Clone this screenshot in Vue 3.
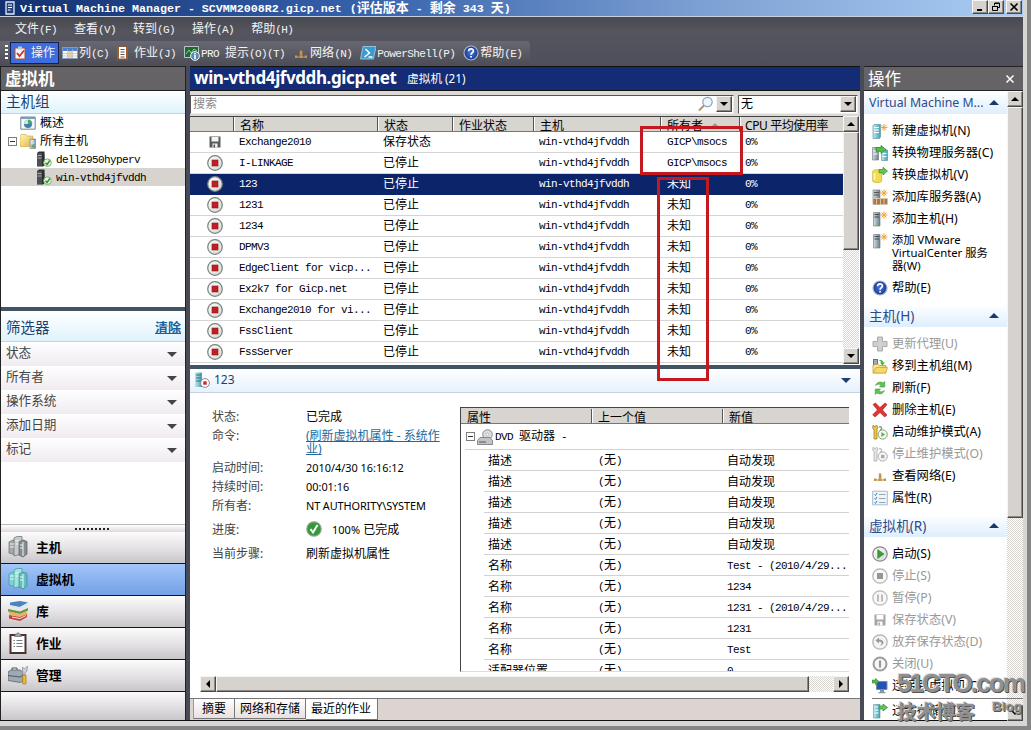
<template>
  <div class="window">
    <svg class="symbols" aria-hidden="true">
      <defs>
        <linearGradient id="gServer" x1="0" x2="1"><stop offset="0" stop-color="#d5dde0" /><stop offset="1" stop-color="#6d7f88" /></linearGradient>
        <linearGradient id="gVm" x1="0" x2="1"><stop offset="0" stop-color="#bdeaf2" /><stop offset="1" stop-color="#3f9fb4" /></linearGradient>
        <linearGradient id="gRing" x1="0" x2="1" y2="1"><stop offset="0" stop-color="#fff" /><stop offset="1" stop-color="#d3d5d3" /></linearGradient>
        <radialGradient id="gBlue"><stop offset="0" stop-color="#4c7ae0" /><stop offset="1" stop-color="#16388f" /></radialGradient>
        <linearGradient id="gFolder" x1="0" x2="1" y2="1"><stop offset="0" stop-color="#fff6b8" /><stop offset="1" stop-color="#e3b53c" /></linearGradient>
      </defs>
      <symbol id="stop" viewBox="0 0 16 16">
        <circle cx="8" cy="8" r="7.3" fill="url(#gRing)" stroke="#77827b" stroke-width="1.2" />
        <rect x="5" y="5" width="6" height="6" fill="#c01f24" stroke="#8f1a1c" stroke-width=".6" />
      </symbol>
      <symbol id="floppy" viewBox="0 0 16 16">
        <path d="M2.500 2.500h11v11h-11z" fill="#5a5a5a" /><path d="M4.500 3h7v4.500h-7zM5.500 9.500h5v4h-5z" fill="#f4f4f4" /><path d="M6.500 10.500h1.600v3H6.500z" fill="#555" />
      </symbol>
      <symbol id="overview" viewBox="0 0 16 16">
        <path d="M.8 2h14.4v12.2H.8z" fill="#f4f8fa" stroke="#72858f" /><path d="M1 2h14v2H1z" fill="#7ba1b8" />
        <circle cx="8" cy="9" r="4" fill="#3f7fa8" /><path d="M8 9V4.6A4.4 4.4 0 0 1 12.4 9z" fill="#4aa860" /><path d="M8 9H4a4 4 0 0 1 4-4z" fill="#cfe3ee" />
      </symbol>
      <symbol id="folder" viewBox="0 0 16 16">
        <path d="M0 3l1-1.500h5L7.200 3H13v10.500H0z" fill="url(#gFolder)" stroke="#cda93b" stroke-width=".6" />
        <path d="M10 6h5.500v9.500H10z" fill="url(#gServer)" stroke="#66767c" stroke-width=".5" /><path d="M11 8h3.500M11 10h3.500" stroke="#fff" /><path d="M11.500 12.500h2v1.500h-2z" fill="#48a344" />
      </symbol>
      <symbol id="host" viewBox="0 0 16 16">
        <path d="M1 2l2-1.500h5.500L9 14l-2 1.500H1z" fill="#2c3033" /><path d="M1 2h5v13H1z" fill="#4a5054" /><path d="M1.500 4.500h4M1.500 7h4" stroke="#a5adb1" />
        <circle cx="11.500" cy="11.700" r="3.800" fill="#e9f5e5" stroke="#7eb371" /><path d="M9.500 11.700l1.600 1.800 2.700-4" fill="none" stroke="#2d9130" stroke-width="1.400" />
      </symbol>
      <symbol id="vmNew" viewBox="0 0 16 16">
        <path d="M1 2.500L2 1.500h6.500V14l-1 1.500H1z" fill="url(#gVm)" stroke="#5d8d99" stroke-width=".6" /><path d="M2 4.500h5M2 7h5M2 9.500h5" stroke="#fff" /><path d="M12 1v7M8.500 4.500h7M9.600 2.100l4.800 4.800M14.400 2.100L9.600 6.900" stroke="#f0a33b" />
      </symbol>
      <symbol id="p2v" viewBox="0 0 16 16">
        <path d="M.5 2.500h6V15h-6z" fill="url(#gServer)" stroke="#66757b" stroke-width=".6" /><path d="M9.500 5h6v10.500h-6z" fill="url(#gVm)" stroke="#47909e" stroke-width=".6" /><path d="M1.500 6h4M1.500 9h4M10.500 8.500h4M10.500 11.500h4" stroke="#fff" />
        <path d="M4 2.500h5V.500l5 4-5 4v-2.200H4z" fill="#55bd49" stroke="#25812a" stroke-width=".7" />
      </symbol>
      <symbol id="v2v" viewBox="0 0 16 16">
        <path d="M.7 4.500c0-2.500 9-2.500 9 0v9.500c0 2-9 2-9 0z" fill="#f3db52" stroke="#d3ac21" stroke-width=".7" /><path d="M2.500 6v7" stroke="#fff8b8" stroke-width="1.500" />
        <path d="M7 2.500h4V.300l4.500 3.800L11 8V5.800H7z" fill="#66c653" stroke="#2c8a2e" stroke-width=".7" />
      </symbol>
      <symbol id="library" viewBox="0 0 16 16">
        <path d="M1 1h7v14H1z" fill="url(#gServer)" stroke="#6b767b" stroke-width=".6" /><path d="M2 3.500h5M2 6h5" stroke="#555" />
        <path d="M1.500 9.500h14v6h-14z" fill="#a17b54" /><path d="M1.500 9.500h14M4.500 10v5.500M8.500 10v5.500M12 10v5.500" stroke="#dfc298" /><path d="M12 .500v7M8.500 4h7M9.600 1.600l4.800 4.800M14.400 1.600L9.600 6.400" stroke="#f0a33b" />
      </symbol>
      <symbol id="hostNew" viewBox="0 0 16 16">
        <path d="M1.500 1.500h6.500V15H1.500z" fill="url(#gServer)" stroke="#66757b" stroke-width=".6" /><path d="M2.500 3.500h4.500M2.500 6h4.500" stroke="#3e4a50" /><path d="M5.500 12h1.500v1.500H5.500z" fill="#51b846" /><path d="M12 .500v7M8.500 4h7M9.600 1.600l4.800 4.800M14.400 1.600L9.600 6.400" stroke="#f0a33b" />
      </symbol>
      <symbol id="help" viewBox="0 0 16 16">
        <circle cx="8" cy="8" r="7" fill="url(#gBlue)" stroke="#a9b3cb" stroke-width="1.200" /><path d="M5.600 6.300C5.600 3 10.500 3.100 10.400 6c0 1.700-2.300 1.700-2.300 3.700" fill="none" stroke="#fff" stroke-width="1.700" /><path d="M7.200 10.900h1.800v1.700H7.200z" fill="#fff" />
      </symbol>
      <symbol id="plus" viewBox="0 0 16 16"><path d="M5.500 1h5v4.500H15v5h-4.500V15h-5v-4.500H1v-5h4.500z" fill="#cfcfcf" stroke="#aaa" /></symbol>
      <symbol id="move" viewBox="0 0 16 16">
        <path d="M1 1h5v9H1z" fill="#567482" /><path d="M2 3h3M2 5h3" stroke="#dce9ef" /><path d="M1 7l5-1 1.500 1.500H14v7.500H1z" fill="url(#gFolder)" stroke="#bf9428" stroke-width=".7" /><path d="M1.500 15L4 9.500h11.700L13.500 15z" fill="#f7d868" stroke="#c59a2b" stroke-width=".6" /><path d="M6.500 2.500c3-1.500 4.500 0 4.800 2h1.700L10.500 7.600 8 4.500h1.500C9.200 3.300 8 3 6.500 2.500z" fill="#4aae46" />
      </symbol>
      <symbol id="refresh" viewBox="0 0 16 16">
        <path d="M3.500 5.500C5 1.500 9.500 1.500 11 3l1.800-1.500V7H7.500l1.700-2C7.500 3.800 5.500 4 3.500 5.500z" fill="#5fc257" stroke="#348f38" stroke-width=".5" /><path d="M12.500 10.500C11 14.500 6.500 14.500 5 13l-1.800 1.500V9h5.300l-1.700 2c1.700 1.200 3.700 1 5.700-.5z" fill="#5fc257" stroke="#348f38" stroke-width=".5" />
      </symbol>
      <symbol id="delete" viewBox="0 0 16 16"><path d="M1 2.500L3.500 1 8 5.500 13 1l2 1.500L10.500 8l4.500 5-2.300 2L8 10.500 3 15 .7 12.700 5.500 8z" fill="#df3431" stroke="#a91c1f" stroke-width=".6" /></symbol>
      <symbol id="maint" viewBox="0 0 16 16">
        <path d="M1 1.200l2 1.800 1.500-2 1.500 2-1 2.500V15H2V6L.700 4z" fill="#edc548" stroke="#92732a" stroke-width=".7" /><path d="M7 3c2-1 3.500 1 2 2.500L7.500 8" fill="none" stroke="#7d8d91" stroke-width="1.300" /><circle cx="10.700" cy="10.500" r="4.600" fill="#f5f9f1" stroke="#84a275" /><path d="M9.300 8v5l4-2.500z" fill="#73ad55" />
      </symbol>
      <symbol id="maintOff" viewBox="0 0 16 16">
        <path d="M1 1.200l2 1.800 1.500-2 1.500 2-1 2.500V15H2V6L.700 4z" fill="#e3e3e3" stroke="#aaa" stroke-width=".7" /><path d="M7 3c2-1 3.500 1 2 2.500L7.500 8" fill="none" stroke="#bbb" stroke-width="1.300" /><circle cx="10.700" cy="10.500" r="4.600" fill="#f7f7f7" stroke="#aaa" /><path d="M9 8.800h3.500v3.500H9z" fill="#aaa" />
      </symbol>
      <symbol id="network" viewBox="0 0 16 16"><path d="M8 5v6M2 12h12" stroke="#b58b4e" stroke-width="1.200" /><path d="M6.800 6h2.600v4H6.800zM2 10.500h2.500v2.500H2zM11.500 10.500H14v2.500h-2.500zM6.300 10.500h3.500v2.500H6.300z" fill="#c5934a" /></symbol>
      <symbol id="props" viewBox="0 0 16 16"><path d="M.7 1.200h14.600v13.600H.7z" fill="#edf4fa" stroke="#a7bccb" /><path d="M2.500 4.500l1 1L5 3M2.500 8.500l1 1L5 7M2.500 12.500l1 1L5 11" fill="none" stroke="#447bb4" /><path d="M7 4.500h6.500M7 8.500h6.500M7 12.500h6.500" stroke="#9ba6ae" /></symbol>
      <symbol id="play" viewBox="0 0 16 16"><circle cx="8" cy="8" r="7.200" fill="url(#gRing)" stroke="#8b8391" stroke-width="1.200" /><path d="M5.700 3.500v9L12 8z" fill="#35a12e" stroke="#1d7a1f" stroke-width=".5" /></symbol>
      <symbol id="stopOff" viewBox="0 0 16 16"><circle cx="8" cy="8" r="7.200" fill="#f7f7f7" stroke="#b0b0b0" stroke-width="1.200" /><path d="M5 5h6v6H5z" fill="#969696" /></symbol>
      <symbol id="pause" viewBox="0 0 16 16"><circle cx="8" cy="8" r="7.200" fill="#f7f7f7" stroke="#b8b8b8" stroke-width="1.200" /><path d="M5 4.500h2v7H5zM9 4.500h2v7H9z" fill="#bbb" /></symbol>
      <symbol id="save" viewBox="0 0 16 16"><path d="M2.500 2.500h11v11h-11z" fill="#a5a5a5" /><path d="M4.500 3h7v4.500h-7zM5.500 9.500h5v4h-5z" fill="#fff" /><path d="M6.500 10.500h1.600v3H6.500z" fill="#aaa" /></symbol>
      <symbol id="undo" viewBox="0 0 16 16"><circle cx="8" cy="8" r="7.200" fill="#f4f4f4" stroke="#b0b0b0" stroke-width="1.200" /><path d="M7 3.500L3.500 6.500 7 9.500V7.500c3.500 0 3.500 3 .5 4 5.500-.3 5.300-6-.5-6z" fill="#999" /></symbol>
      <symbol id="power" viewBox="0 0 16 16"><circle cx="8" cy="8" r="6.500" fill="#f6f6f6" stroke="#9c9c9c" stroke-width="2" /><path d="M8 4.500v7" stroke="#888" stroke-width="1.800" /></symbol>
      <symbol id="connect" viewBox="0 0 16 16"><path d="M4.500 3.500H15v8H4.500z" fill="#2453b8" stroke="#7e8a99" /><path d="M8 12h4v2H8zM6.500 14h7v1.200h-7z" fill="#8a97a3" /><path d="M0 2h3.500V.300L7 3.500 3.500 6.800V5H0z" fill="#53b848" stroke="#27822a" stroke-width=".5" /></symbol>
      <symbol id="migrate" viewBox="0 0 16 16"><path d="M1.500 1.500H8V15H1.500z" fill="url(#gVm)" stroke="#5d8d99" stroke-width=".6" /><path d="M2.500 4h4M2.500 7h4M2.500 10h4" stroke="#fff" /><path d="M7 3h4V1l4.500 3.500L11 8V6H7z" fill="#66c653" stroke="#2c8a2e" stroke-width=".7" /></symbol>
      <symbol id="vmStopped" viewBox="0 0 16 16"><path d="M1 .500h7V15H1z" fill="url(#gVm)" /><path d="M2 3h5M2 6h5M2 9h5" stroke="#36727f" /><circle cx="11" cy="11" r="4.400" fill="#fff" stroke="#98858e" /><path d="M9.300 9.300h3.400v3.400H9.300z" fill="#c3282b" /></symbol>
      <symbol id="actions" viewBox="0 0 16 16"><path d="M3 3h10v11H3z" fill="#f3f5fa" stroke="#a7522c" /><path d="M6 1.500h4v3H6z" fill="#c4c9d6" /><path d="M5 8l2.500 3L12 5.500" fill="none" stroke="#d3302a" stroke-width="1.800" /></symbol>
      <symbol id="columns" viewBox="0 0 16 16"><path d="M.5 2.500h15v11H.5z" fill="#f8f8f8" stroke="#8799b5" /><path d="M1 3h14v3H1z" fill="#4a7fd0" /><path d="M6 6h4.500v7H6z" fill="#f3cf9c" /><path d="M1 8.500h14M1 11h14M5.500 4v9M10.500 4v9" stroke="#b8bfca" stroke-width=".7" /></symbol>
      <symbol id="jobs" viewBox="0 0 16 16"><path d="M0 1.500h11v13H0z" fill="#a35b2a" /><path d="M2 2h7v11.500H2z" fill="#fff" /><path d="M3.500 4.500h4M3.500 7h4M3.500 9.500h4M3.500 12h4" stroke="#555" /></symbol>
      <symbol id="pro" viewBox="0 0 16 16"><path d="M.5 1.500h14v11H.5z" fill="#23663c" stroke="#b9c4c6" /><path d="M2 9l3-4 2 3 3-4 3 2" fill="none" stroke="#7fe06d" /><circle cx="11" cy="11" r="4.400" fill="#5c87b4" stroke="#eef3f8" /><path d="M10.200 8h1.600v1.400h-1.600zM10.200 10h1.600v4h-1.600z" fill="#fff" /></symbol>
      <symbol id="shell" viewBox="0 0 16 16"><path d="M3 1.500h13L13.500 14H.5z" fill="#3c9ad3" stroke="#9ed6f2" stroke-width=".8" /><path d="M5.500 4l4 4L4.500 12M8.500 12h4" fill="none" stroke="#fff" stroke-width="1.500" /></symbol>
      <symbol id="dvd" viewBox="0 0 16 16"><circle cx="10.500" cy="5.500" r="4.800" fill="#d8dcdd" stroke="#868b8d" /><circle cx="10.500" cy="5.500" r="1.300" fill="#fff" stroke="#999" stroke-width=".5" /><path d="M3 8.500h10l2.500 3v4H.5v-4z" fill="#c2c5c7" stroke="#707577" stroke-width=".8" /><path d="M2 13h7" stroke="#555" /></symbol>
      <symbol id="done" viewBox="0 0 16 16"><circle cx="8" cy="8" r="7.200" fill="#35983a" stroke="#8fa38e" stroke-width="1.200" /><path d="M4.500 8l2.500 3.500L11.500 4" fill="none" stroke="#fff" stroke-width="2" /></symbol>
      <symbol id="lens" viewBox="0 0 16 16"><circle cx="9.500" cy="6" r="4.700" fill="#edf5fd" stroke="#8ba4c4" stroke-width="1.200" /><path d="M6 9.500L1 14.500" stroke="#b08f6b" stroke-width="1.800" /></symbol>
      <symbol id="navHost" viewBox="0 0 20 22"><path d="M1 6l4-2h3v15l-7-2z" fill="#a3a9ac" stroke="#646b6e" stroke-width=".7" /><path d="M6 2l3-1.500h5V18l-8 2z" fill="#c6cbcd" stroke="#646b6e" stroke-width=".7" /><path d="M11 6l4-2 4 1.500V18l-4 3-4-2z" fill="#868d91" stroke="#53595c" stroke-width=".7" /><path d="M2 8h4M2 11h4M7.500 5h3M7.500 8h3M12 9h3M12 12h3M15 6v14" stroke="#f0f2f3" /></symbol>
      <symbol id="navVm" viewBox="0 0 20 22"><path d="M1 6l4-2h3v15l-7-2z" fill="#7fd3cf" stroke="#409a99" stroke-width=".7" /><path d="M6 2l3-1.500h5V18l-8 2z" fill="#a0e3dd" stroke="#409a99" stroke-width=".7" /><path d="M11 6l4-2 4 1.500V18l-4 3-4-2z" fill="#64bcbd" stroke="#368b8c" stroke-width=".7" /><path d="M2 8h4M2 11h4M7.500 5h3M7.500 8h3M12 9h3M12 12h3M15 6v14" stroke="#e1fbf8" /></symbol>
      <symbol id="navLib" viewBox="0 0 20 22"><path d="M2 2.500L12 1l8 1.500-8 4.500H2z" fill="#4a83c5" /><path d="M2 5l10 2 8-4v3l-8 3.500L2 7.500z" fill="#e5e8ea" /><path d="M0 9l12 2.500L20 8v2.500L12 14 0 11.500z" fill="#679743" /><path d="M1 11.500l11 2.500 7-3v2.500L12 17 1 14.500z" fill="#e6b368" /><path d="M1 15l11 2 7-3v3l-7 4-11-2.500z" fill="#c64038" /><path d="M4 17l8 1.500 6-3" stroke="#f2e9e6" fill="none" /></symbol>
      <symbol id="navJobs" viewBox="0 0 20 22"><path d="M2.500 3h15v18h-15z" fill="#fff" stroke="#4b3430" stroke-width="2" /><path d="M6.500 4.500l1-2.500h1.500l1-1.500 1 1.500h1.500l1 2.500z" fill="#a3a8ad" stroke="#555" stroke-width=".6" /><path d="M5.500 8.500h1.500M5.500 11.500h1.500M5.500 14.500h1.500M8.500 8.500h6M8.500 11.500h6M8.500 14.500h6" stroke="#767b82" /></symbol>
      <symbol id="navAdmin" viewBox="0 0 20 22"><path d="M0 8l3-2h9l3 2v9l-3 1.500-12-2z" fill="#9daab3" stroke="#5b666e" stroke-width=".8" /><path d="M4 6V4h5v2M0 11.500l12 1.500 3-2" fill="none" stroke="#4f5960" /><path d="M14.500 7V3l2 2 3-3-.500 5-2 2v2h-2z" fill="#c8d0d5" stroke="#78838a" stroke-width=".6" /><path d="M14.700 11h3.300v9h-3.300z" fill="#efb92f" stroke="#aa7c17" stroke-width=".7" /></symbol>
      <symbol id="console" viewBox="0 0 16 16"><path d="M4 2h8v12H4z" fill="#27407f" stroke="#e3e8f3" stroke-width="1.300" /><path d="M6 5h4M6 7.500h4M6 10h2.500" stroke="#fff" /></symbol>
    </svg>

    <header class="titlebar">
      <svg class="icon"><use href="#console" /></svg>
      <Mixed text="Virtual Machine Manager - SCVMM2008R2.gicp.net" />
      <Mixed class="edition" text="(评估版本 - 剩余 343 天)" />
      <div class="buttons">
        <span class="raised"><svg viewBox="0 0 12 10"><path d="M3 8h5" stroke="#000" stroke-width="2" /></svg></span>
        <span class="raised"><svg viewBox="0 0 12 10"><path d="M4.500 3.500V1h5v4.500H7.500M4 1.500h6M2.500 4.500h5v4h-5zM2 4.500h6" fill="none" stroke="#000" /></svg></span>
        <span class="raised close"><svg viewBox="0 0 12 10"><path d="M2.500 1.500l7 7M9.500 1.500l-7 7" stroke="#000" stroke-width="1.600" /></svg></span>
      </div>
    </header>

    <div class="bars">
      <nav class="menu">
        <Mixed v-for="item in menus" :key="item" :text="item" />
      </nav>
      <div class="toolbar">
        <i class="grip"></i>
        <div class="tool active"><svg class="icon"><use href="#actions" /></svg><Mixed text="操作" /></div>
        <div v-for="tool in tools" :key="tool.icon" class="tool">
          <svg class="icon"><use :href="'#' + tool.icon" /></svg>
          <Mixed :text="tool.text" />
        </div>
      </div>
    </div>

    <div class="body">
      <aside class="left">
        <h2 class="dark-title">虚拟机</h2>
        <h3 class="group-title">主机组</h3>
        <div class="tree">
          <div class="node top"><svg class="icon"><use href="#overview" /></svg>概述</div>
          <div class="node root"><i class="expander"></i><svg class="icon"><use href="#folder" /></svg>所有主机</div>
          <div class="node child"><svg class="icon"><use href="#host" /></svg><Mixed text="dell2950hyperv" /></div>
          <div class="node child selected"><svg class="icon"><use href="#host" /></svg><Mixed text="win-vthd4jfvddh" /></div>
        </div>
        <div class="filter-title"><span>筛选器</span><a>清除</a></div>
        <div class="filters">
          <div v-for="filter in filters" :key="filter" class="filter">{{ filter }}<i class="arrow down"></i></div>
        </div>
        <div class="splitter"><i></i></div>
        <div v-for="nav in navs" :key="nav.text" class="nav" :class="{ current: nav.text === '虚拟机' }">
          <svg><use :href="'#' + nav.icon" /></svg>{{ nav.text }}
        </div>
        <div class="nav-rest"></div>
      </aside>

      <main class="center">
        <h1 class="host-title"><b>win-vthd4jfvddh.gicp.net</b><span>虚拟机 (21)</span></h1>
        <div class="search-row">
          <div class="field search">
            <span>搜索</span>
            <svg class="icon"><use href="#lens" /></svg>
            <span class="raised btn"><i class="arrow down"></i></span>
          </div>
          <div class="field combo"><span>无</span><span class="raised btn"><i class="arrow down"></i></span></div>
        </div>

        <div class="list">
          <div class="table">
            <div class="row head">
              <span></span><span>名称</span><span>状态</span><span>作业状态</span><span>主机</span>
              <span>所有者<i class="arrow up sort"></i></span><span class="cpu">CPU 平均使用率</span>
            </div>
            <div v-for="vm in vms" :key="vm.name" class="row" :class="{ selected: vm.name === '123' }">
              <svg class="icon"><use :href="vm.saved ? '#floppy' : '#stop'" /></svg>
              <Mixed :text="vm.name" />
              <Mixed :text="vm.saved ? '保存状态' : '已停止'" />
              <span></span>
              <Mixed text="win-vthd4jfvddh" />
              <Mixed :text="vm.owner || '未知'" />
              <Mixed text="0%" />
            </div>
          </div>
          <div class="scroll">
            <span class="raised btn"><i class="arrow up"></i></span>
            <span class="raised thumb"></span>
            <span class="raised btn last"><i class="arrow down"></i></span>
          </div>
          <div class="mark owners"></div>
          <div class="mark unknown"></div>
        </div>

        <div class="detail-title">
          <svg class="icon"><use href="#vmStopped" /></svg><span>123</span><i class="arrow down"></i>
        </div>
        <div class="detail">
          <dl class="job">
            <dt>状态:</dt><dd>已完成</dd>
            <dt>命令:</dt><dd class="two-line"><a>(刷新虚拟机属性 - 系统作<br>业)</a></dd>
            <dt>启动时间:</dt><dd>2010/4/30 16:16:12</dd>
            <dt>持续时间:</dt><dd>00:01:16</dd>
            <dt>所有者:</dt><dd class="account">NT AUTHORITY\SYSTEM</dd>
            <dt class="tall">进度:</dt><dd class="tall progress"><svg class="icon"><use href="#done" /></svg><span><small>100%</small> 已完成</span></dd>
            <dt class="tall">当前步骤:</dt><dd class="tall">刷新虚拟机属性</dd>
          </dl>
          <div class="props">
            <div class="prop head"><span>属性</span><span>上一个值</span><span>新值</span></div>
            <div class="device"><i class="expander"></i><svg class="icon"><use href="#dvd" /></svg><Mixed text="DVD 驱动器 -" /></div>
            <div v-for="(prop, i) in props" :key="i" class="prop">
              <Mixed :text="prop[0]" /><Mixed text="(无)" /><Mixed :text="prop[1]" />
            </div>
          </div>
        </div>
        <div class="hscroll">
          <span class="raised btn"><i class="arrow to-left"></i></span>
          <span class="raised bar"></span>
          <span class="raised btn end"><i class="arrow to-right"></i></span>
        </div>
        <div class="tabs"><span>摘要</span><span>网络和存储</span><span class="open">最近的作业</span></div>
      </main>

      <aside class="right">
        <h2 class="dark-title">操作<svg viewBox="0 0 10 10"><path d="M1.500 1.500l7 7M8.500 1.500l-7 7" stroke="#fff" stroke-width="1.500" /></svg></h2>
        <div class="right-body">
          <div class="sections">
            <section v-for="section in sections" :key="section.title">
              <h3><span>{{ section.title }}</span><i class="arrow up"></i></h3>
              <div
                v-for="action in section.items"
                :key="action.text"
                class="action"
                :class="{ disabled: action.off, wrapped: action.lines, below: action.below }"
              >
                <svg class="icon"><use :href="'#' + action.icon" /></svg>
                <span>{{ action.text }}</span>
              </div>
            </section>
          </div>
          <div class="scroll">
            <span class="raised btn"><i class="arrow up"></i></span>
            <span class="raised thumb"></span>
            <span class="raised btn last"><i class="arrow down"></i></span>
          </div>
        </div>
      </aside>
    </div>
    <div class="watermark"><b>51CTO.com</b><span>技术博客</span><em>Blog</em></div>
  </div>
</template>

<script setup>
import { h } from 'vue'

// Latin runs are half as wide as the Chinese glyphs, so they get their own span
const Mixed = (props) => h(
  'span',
  { class: 'mixed' },
  props.text.match(/[\x20-\x7e]+|[^\x20-\x7e]+/g).map((run) => (
    h('span', { class: /^[\x20-\x7e]/.test(run) ? 'half' : 'full' }, run)
  ))
)
Mixed.props = ['text']

const menus = ['文件(F)', '查看(V)', '转到(G)', '操作(A)', '帮助(H)']

const tools = [
  { icon: 'columns', text: '列(C)' },
  { icon: 'jobs', text: '作业(J)' },
  { icon: 'pro', text: 'PRO 提示(O)(T)' },
  { icon: 'network', text: '网络(N)' },
  { icon: 'shell', text: 'PowerShell(P)' },
  { icon: 'help', text: '帮助(E)' }
]

const filters = ['状态', '所有者', '操作系统', '添加日期', '标记']

const navs = [
  { icon: 'navHost', text: '主机' },
  { icon: 'navVm', text: '虚拟机' },
  { icon: 'navLib', text: '库' },
  { icon: 'navJobs', text: '作业' },
  { icon: 'navAdmin', text: '管理' }
]

const vms = [
  { name: 'Exchange2010', saved: true, owner: 'GICP\\msocs' },
  { name: 'I-LINKAGE', owner: 'GICP\\msocs' },
  { name: '123' },
  { name: '1231' },
  { name: '1234' },
  { name: 'DPMV3' },
  { name: 'EdgeClient for vicp...' },
  { name: 'Ex2k7 for Gicp.net' },
  { name: 'Exchange2010 for vi...' },
  { name: 'FssClient' },
  { name: 'FssServer' }
]

const props = [
  ['描述', '自动发现'],
  ['描述', '自动发现'],
  ['描述', '自动发现'],
  ['描述', '自动发现'],
  ['描述', '自动发现'],
  ['名称', 'Test - (2010/4/29...'],
  ['名称', '1234'],
  ['名称', '1231 - (2010/4/29...'],
  ['名称', '1231'],
  ['名称', 'Test'],
  ['适配器位置', '0']
]

const sections = [
  {
    title: 'Virtual Machine M...',
    items: [
      { icon: 'vmNew', text: '新建虚拟机(N)' },
      { icon: 'p2v', text: '转换物理服务器(C)' },
      { icon: 'v2v', text: '转换虚拟机(V)' },
      { icon: 'library', text: '添加库服务器(A)' },
      { icon: 'hostNew', text: '添加主机(H)' },
      { icon: 'hostNew', text: '添加 VMware\nVirtualCenter 服务\n器(W)', lines: true },
      { icon: 'help', text: '帮助(E)' }
    ]
  },
  {
    title: '主机(H)',
    items: [
      { icon: 'plus', text: '更新代理(U)', off: true },
      { icon: 'move', text: '移到主机组(M)' },
      { icon: 'refresh', text: '刷新(F)' },
      { icon: 'delete', text: '删除主机(E)' },
      { icon: 'maint', text: '启动维护模式(A)' },
      { icon: 'maintOff', text: '停止维护模式(O)', off: true },
      { icon: 'network', text: '查看网络(E)' },
      { icon: 'props', text: '属性(R)' }
    ]
  },
  {
    title: '虚拟机(R)',
    items: [
      { icon: 'play', text: '启动(S)' },
      { icon: 'stopOff', text: '停止(S)', off: true },
      { icon: 'pause', text: '暂停(P)', off: true },
      { icon: 'save', text: '保存状态(V)', off: true },
      { icon: 'undo', text: '放弃保存状态(D)', off: true },
      { icon: 'power', text: '关闭(U)', off: true },
      { icon: 'connect', text: '连接到虚拟机(C)' },
      { icon: 'migrate', text: '迁移存储(M)', below: true }
    ]
  }
]
</script>

<style>
body {
  margin: 0;
  background: #8d8d8d;
}

.mixed {
  white-space: pre;
}

.mixed .half {
  font-family: "Liberation Mono", monospace;
  font-size: 11px;
  letter-spacing: -0.6px;
}

.mixed .full {
  font-size: 12px;
}

.titlebar .mixed .half {
  font-size: 11.67px;
  letter-spacing: 0;
}

.titlebar .mixed .full {
  font-size: 13px;
}
</style>

<style scoped>
* {
  box-sizing: border-box;
}

.window {
  position: relative;
  width: 1031px;
  height: 730px;
  overflow: hidden;
  border-right: 4px solid #858585;
  border-bottom: 4px solid #858585;
  background: #d8d6d2;
  font: 12px/16px "Noto Sans", "Noto Sans CJK SC", sans-serif;
  color: #000;
}

.symbols {
  position: absolute;
  width: 0;
  height: 0;
}

h1,
h2,
h3,
dl,
dt,
dd {
  margin: 0;
  font-weight: normal;
}

i {
  display: block;
}

.icon {
  flex: none;
  width: 16px;
  height: 16px;
}

.arrow {
  width: 0;
  height: 0;
  border: 4px solid transparent;
}

.arrow.down {
  border-width: 4px 4px 0;
  border-top-color: currentColor;
}

.arrow.up {
  border-width: 0 4px 4px;
  border-bottom-color: currentColor;
}

.arrow.to-left {
  border-width: 4px 4px 4px 0;
  border-right-color: currentColor;
}

.arrow.to-right {
  border-width: 4px 0 4px 4px;
  border-left-color: currentColor;
}

.raised {
  display: flex;
  align-items: center;
  justify-content: center;
  background: #d6d3ce;
  border: 1px solid;
  border-color: #f6f5f3 #494949 #494949 #f6f5f3;
  box-shadow: inset -1px -1px #8d8a86;
}

.btn {
  width: 16px;
  height: 16px;
  flex: none;
}

/* title and menu bars */
.titlebar {
  display: flex;
  align-items: center;
  width: 1023px;
  height: 17px;
  padding-left: 2px;
  border-bottom: 1px solid #c9d1de;
  background: linear-gradient(90deg, #12306f, #3561ab 35%, #7c9fd2 68%, #a9cdf4);
  color: #fff;
  font-weight: bold;
  line-height: 14px;
}

.titlebar .icon {
  margin-right: 2px;
}

.edition {
  margin-left: 8px;
}

.buttons {
  display: flex;
  align-self: flex-start;
  margin-left: auto;
  margin-right: 1px;
}

.buttons .raised {
  width: 16px;
  height: 14px;
}

.buttons svg {
  width: 12px;
  height: 10px;
}

.buttons .close {
  margin-left: 2px;
}

.bars {
  width: 1023px;
  height: 49px;
  background: linear-gradient(#484850, #55555f 30%, #4e4f5a);
  color: #f4f4f4;
}

.menu {
  display: flex;
  gap: 17px;
  height: 24px;
  padding: 4px 0 0 15px;
}

.toolbar {
  display: flex;
  align-items: center;
  gap: 8px;
  width: 530px;
  height: 24px;
  border-radius: 0 4px 3px 0;
  background: linear-gradient(#686872, #4d4d58);
}

.grip {
  width: 3px;
  height: 16px;
  margin: 0 -6px 0 5px;
  background: repeating-linear-gradient(#fff 0 2px, transparent 2px 4px);
}

.tool {
  display: flex;
  align-items: center;
  gap: 1px;
}

.tool.active {
  gap: 3px;
  width: 49px;
  height: 22px;
  margin-right: -5px;
  padding-left: 1px;
  border: 1px solid #10204f;
  background: #3d6de0;
}

.body {
  display: flex;
  width: 1023px;
  height: 655px;
  border-bottom: 1px solid #111;
  border-left: 1px solid #222;
  background: #484b55;
}

.dark-title {
  display: flex;
  align-items: center;
  justify-content: space-between;
  height: 25px;
  padding: 1px 8px 0 4px;
  border-top: 1px solid #222;
  border-bottom: 1px solid #222;
  background: #656366;
  color: #fff;
  font-size: 16.5px;
}

.dark-title svg {
  width: 10px;
  height: 10px;
}

/* left column */
.left {
  display: flex;
  flex-direction: column;
  width: 185px;
  border-right: 1px solid #222;
  background: #fff;
}

.left .dark-title {
  font-weight: bold;
}

.group-title {
  height: 23px;
  padding-left: 5px;
  border-bottom: 1px solid #b2dbe9;
  background: linear-gradient(#fff, #def3fc);
  color: #1c3f71;
  font-size: 14.5px;
  line-height: 21px;
}

.tree {
  height: 193px;
}

.node {
  display: flex;
  align-items: center;
  gap: 4px;
  height: 18px;
}

.top {
  padding-left: 19px;
}

.root {
  padding-left: 7px;
}

.child {
  padding-left: 35px;
}

.node.selected {
  background: #d7d3cf;
}

.expander {
  width: 9px;
  height: 9px;
  border: 1px solid #7d7d7d;
  background: linear-gradient(#333, #333) center / 5px 1px no-repeat;
}

.root .expander {
  margin-right: -1px;
}

.filter-title {
  display: flex;
  align-items: center;
  justify-content: space-between;
  height: 35px;
  padding: 1px 4px 0 5px;
  border-top: 4px solid #415464;
  border-bottom: 1px solid #b2dbe9;
  background: linear-gradient(#fff, #dff3fc);
  color: #1c3f71;
  font-size: 14.5px;
}

.filter-title a {
  color: #17619f;
  font-size: 13px;
  font-weight: bold;
  text-decoration: underline;
}

.filters {
  height: 182px;
}

.filter {
  display: flex;
  align-items: center;
  justify-content: space-between;
  height: 24px;
  padding: 0 8px 2px 5px;
  background: linear-gradient(#fff, #f0ebf0);
  color: #444;
  font-size: 12.6px;
}

.filter .arrow {
  border-width: 5px 5px 0;
  margin-top: 2px;
}

.splitter {
  height: 8px;
  padding-top: 3px;
  border-top: 1px solid #bbb;
  background: linear-gradient(#fff, #ddd8dc);
}

.splitter i {
  width: 35px;
  height: 2px;
  margin-left: 74px;
  background: repeating-linear-gradient(90deg, #222 0 2px, transparent 2px 4px);
}

.nav {
  display: flex;
  align-items: center;
  gap: 8px;
  height: 32px;
  padding: 0 0 1px 7px;
  border-bottom: 1px solid #15151f;
  background: linear-gradient(#fcfbfc, #e6e3e6 50%, #c9c6c9);
  font-size: 12.8px;
  font-weight: bold;
}

.nav.current {
  background: linear-gradient(#a2c6fa, #8ab2ef 50%, #74a1e6);
}

.nav svg {
  width: 20px;
  height: 22px;
}

.nav-rest {
  flex: 1;
  background: linear-gradient(#fcfbfc, #c9c6c9);
}

/* center column */
.center {
  display: flex;
  flex-direction: column;
  width: 670px;
  margin-left: 4px;
  background: #fff;
}

.host-title {
  display: flex;
  align-items: center;
  gap: 10px;
  height: 25px;
  padding-left: 4px;
  border-top: 1px solid #111;
  border-bottom: 1px solid #111;
  background: #142c76;
  color: #fff;
  font-size: 11.7px;
}

.host-title b {
  width: 203px;
  font-size: 17px;
  letter-spacing: -0.4px;
  white-space: nowrap;
}

.search-row {
  display: flex;
  gap: 4px;
  height: 25px;
  padding: 4px 2px 2px 0;
  background: #dcd8d3;
}

.field {
  display: flex;
  align-items: center;
  padding: 0 1px 0 2px;
  border: 1px solid;
  border-color: #555 #eee #eee #555;
  background: #fff;
}

.search {
  width: 544px;
  color: #888;
}

.search .icon {
  margin-left: auto;
}

.search .btn {
  margin-left: 2px;
  color: #000;
}

.combo {
  flex: 1;
}

.combo .btn {
  margin-left: auto;
}

.list {
  position: relative;
  display: flex;
  height: 249px;
}

.table {
  width: 653px;
}

.row {
  display: grid;
  grid-template-columns: 49px 145px 75px 80px 128px 78px 98px;
  align-items: center;
  height: 21px;
  border-bottom: 1px solid #d5d5d5;
}

.row .icon {
  margin-left: 17px;
}

.row .mixed:nth-child(3) {
  margin-left: -1px;
}

.row.selected {
  background: #0c246a;
  border-color: #0c246a;
  color: #fff;
}

.row.head {
  grid-template-columns: 43px 144px 75px 81px 127px 79px 104px;
  height: 16px;
  border-top: 1px solid #444;
  border-bottom: 1px solid #777;
  background: #d8d4cf;
}

.head span {
  height: 14px;
  padding-left: 6px;
  border-left: 1px solid #555;
  box-shadow: inset 1px 0 #fff;
  line-height: 17px;
  white-space: nowrap;
}

.head span:first-child {
  border-left: 0;
  box-shadow: none;
}

.row.head span:nth-child(6) {
  display: flex;
}

.head .cpu {
  padding-left: 5px;
  letter-spacing: -0.4px;
}

.sort {
  margin: 6px 0 0 8px;
  color: #999;
}

.scroll {
  display: flex;
  flex-direction: column;
  width: 16px;
  background: repeating-conic-gradient(#fff 0 25%, #d9d6d1 0 50%) 0 0 / 2px 2px;
}

.list .scroll {
  height: 248px;
}

.list .thumb {
  height: 118px;
}

.last {
  margin-top: auto;
}

.mark {
  position: absolute;
  border: 3px solid #c3191f;
}

.owners {
  left: 450px;
  top: 10px;
  width: 103px;
  height: 49px;
}

.unknown {
  left: 467px;
  top: 61px;
  width: 52px;
  height: 204px;
}

.detail-title {
  display: flex;
  align-items: center;
  gap: 4px;
  height: 29px;
  padding: 0 9px 0 4px;
  border-top: 4px solid #415464;
  border-bottom: 1px solid #c9d3df;
  background: linear-gradient(#fff, #e5f1fc);
  color: #1c3f71;
}

.detail-title .arrow {
  margin-left: auto;
  border-width: 5px 5px 0;
}

.detail {
  display: flex;
  height: 283px;
  padding-top: 14px;
}

.job {
  display: grid;
  grid-template-columns: 94px 154px;
  align-content: start;
  width: 270px;
  padding-left: 22px;
  line-height: 19px;
  font-size: 10.9px;
}

.job dt {
  color: #444;
  font-size: 12px;
}

.job dd {
  white-space: nowrap;
}

.job dt:first-child,
.job dt:first-child + dd,
.two-line,
.job .tall {
  font-size: 12px;
}

.two-line {
  height: 32px;
  padding-top: 3px;
  line-height: 13px;
}

.two-line a {
  color: #1c6a9c;
  text-decoration: underline;
}

.account {
  letter-spacing: -0.1px;
}

.tall {
  height: 24px;
  line-height: 29px;
}

.progress {
  display: flex;
  align-items: center;
  gap: 10px;
  padding-top: 4px;
}

.progress small {
  font-size: 11px;
}

.props {
  width: 389px;
  height: 265px;
  overflow: hidden;
  border-top: 1px solid #444;
  border-left: 1px solid #444;
  border-bottom: 1px solid #ddd;
}

.prop {
  display: grid;
  grid-template-columns: 110px 129px 1fr;
  align-items: center;
  height: 21px;
  margin-left: 23px;
  padding: 1px 0 0 4px;
  border-bottom: 1px solid #d2d2d2;
}

.prop.head {
  grid-template-columns: 130px 131px 1fr;
  height: 16px;
  margin: 0;
  padding: 0;
  border-bottom-color: #777;
  background: #d8d4cf;
}

.prop.head span:first-child {
  border-left: 0;
}

.device {
  display: flex;
  align-items: center;
  gap: 2px;
  height: 26px;
  margin-left: 4px;
  padding-left: 1px;
  border-bottom: 1px solid #d2d2d2;
}

.hscroll {
  display: flex;
  width: 649px;
  height: 16px;
  margin-left: 10px;
  background: repeating-conic-gradient(#fff 0 25%, #d9d6d1 0 50%) 0 0 / 2px 2px;
}

.bar {
  width: 593px;
}

.end {
  margin-left: auto;
}

.tabs {
  display: flex;
  flex: 1;
  margin-top: 6px;
  padding-left: 3px;
  border-top: 1px solid #777;
  background: #dbd4d1;
}

.tabs span {
  height: 20px;
  padding: 0 5px;
  border: 1px solid #777;
  border-top: 0;
  border-left-color: #999;
  background: linear-gradient(#fff, #e8e0df);
  line-height: 20px;
}

.tabs span:first-child {
  padding: 0 8px;
}

.tabs span + span {
  border-left: 0;
}

.tabs .open {
  height: 21px;
  padding: 0 6px 0 5px;
  background: #fff;
}

/* right column */
.right {
  width: 159px;
  margin-left: 4px;
  background: #fff;
}

.right-body {
  display: flex;
  height: 630px;
}

.sections {
  width: 143px;
  overflow: hidden;
}

.right h3 {
  display: flex;
  align-items: center;
  justify-content: space-between;
  height: 23px;
  margin-bottom: 6px;
  padding: 0 8px 0 5px;
  background: linear-gradient(#fff, #dfeefc);
  color: #2b4a8b;
  font-size: 13.6px;
  white-space: nowrap;
}

.right section:first-child h3 {
  font-size: 12.3px;
}

.right h3 .arrow {
  border-width: 0 5px 5px;
  color: #163a70;
}

.right section + section {
  padding-top: 5px;
}

.action {
  display: flex;
  align-items: center;
  gap: 4px;
  height: 22px;
  padding-left: 8px;
  font-size: 12.3px;
  white-space: pre;
}

.action.wrapped {
  align-items: flex-start;
  height: 47px;
  padding-top: 3px;
  font-size: 11.3px;
  line-height: 13px;
}

.action.disabled {
  color: #999;
}

.action.below {
  height: 28px;
}

.right .thumb {
  height: 411px;
}

.watermark {
  position: absolute;
  left: 897px;
  top: 666px;
  width: 130px;
  color: #909090;
  font-family: "Liberation Sans", "Noto Sans CJK SC", sans-serif;
  text-shadow: 1px 1px #555, -1px -1px #ddd;
}

.watermark::after {
  content: "";
  position: absolute;
  left: -25px;
  top: 32px;
  width: 151px;
  height: 1px;
  background: #777;
}

.watermark b {
  display: block;
  font-family: "Liberation Sans Narrow", "Liberation Sans", sans-serif;
  font-size: 26px;
  line-height: 34px;
  letter-spacing: -1.9px;
}

.watermark span {
  font-size: 19.5px;
  font-weight: bold;
  line-height: 24px;
}

.watermark em {
  position: absolute;
  left: 95px;
  top: 33px;
  font-size: 13.5px;
  font-style: normal;
  font-weight: bold;
}
</style>
